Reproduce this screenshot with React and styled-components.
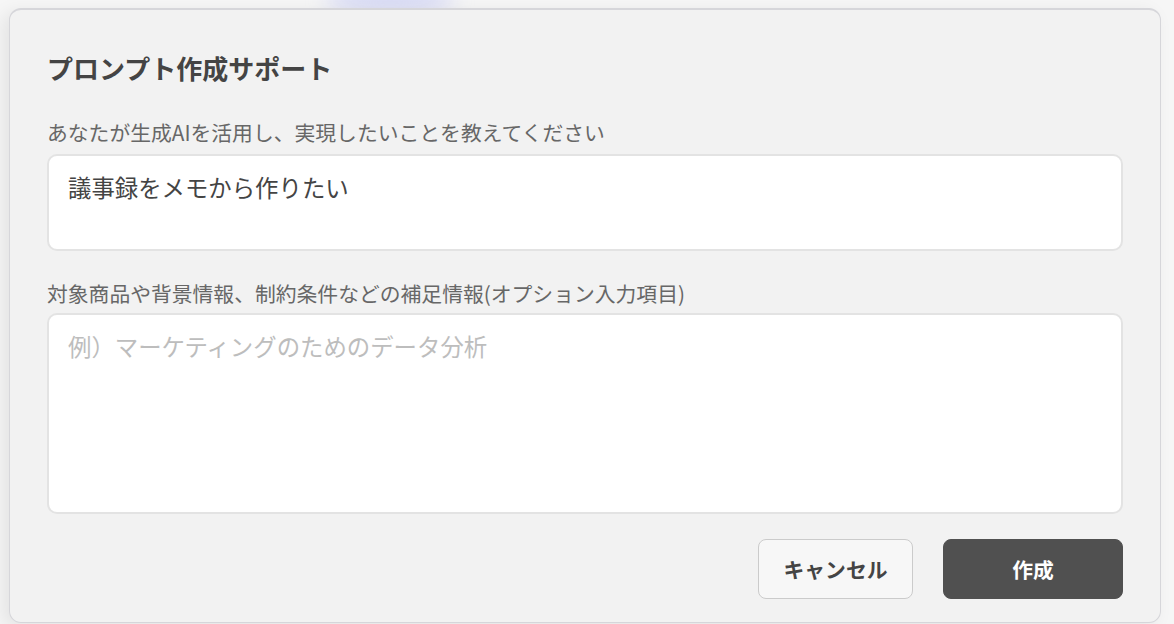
import React from "react"
import styled, { createGlobalStyle } from "styled-components"

const GlobalStyle = createGlobalStyle`
  html, body {
    margin: 0;
    padding: 0;
    background: #f6f6f6;
    height: 624px;
    overflow: hidden;
  }
  * {
    box-sizing: border-box;
  }
`

const font = `"Noto Sans CJK JP", "Noto Sans", sans-serif`

const StyledPage = styled.div`
  position: relative;
  padding: 8px 13px 0 9px;
  font-family: ${font};
`

// faint blue glow peeking above the dialog
const StyledGlow = styled.div`
  position: absolute;
  top: -14px;
  left: 325px;
  width: 130px;
  height: 26px;
  border-radius: 50%;
  background: rgba(190, 195, 245, 0.6);
  filter: blur(10px);
`

const StyledModal = styled.div`
  position: relative;
  display: flex;
  flex-direction: column;
  padding: 37px 37px 23px 37px;
  background: #f2f2f2;
  border: 1px solid #d6d6da;
  border-top-width: 2px;
  border-radius: 12px;
  box-shadow: -6px 4px 18px rgba(0, 0, 0, 0.08);
`

const StyledTitle = styled.h2`
  margin: 0;
  font-size: 26px;
  line-height: 42px;
  font-weight: 700;
  color: #444;
`

const StyledLabel = styled.label`
  display: block;
  margin-top: ${(props) => props.gap}px;
  font-size: 20.8px;
  line-height: 31px;
  color: #676767;
`

const StyledField = styled.textarea`
  display: block;
  width: 100%;
  height: ${(props) => props.h}px;
  margin-top: ${(props) => props.gap}px;
  padding: 14px 19px;
  resize: none;
  outline: none;
  background: #fff;
  border: 2px solid #e3e3e3;
  border-radius: 10px;
  font-family: ${font};
  font-size: 23.4px;
  line-height: 35px;
  color: #444;

  &::placeholder {
    color: #bdbdbd;
  }
`

const StyledActions = styled.div`
  display: flex;
  justify-content: flex-end;
  gap: 30px;
  margin-top: 25px;
`

const StyledButton = styled.button`
  width: ${(props) => (props.primary ? 180 : 155)}px;
  height: 60px;
  border-radius: 8px;
  border: 1px solid ${(props) => (props.primary ? "#505050" : "#cbcbcb")};
  background: ${(props) => (props.primary ? "#505050" : "#f7f7f7")};
  color: ${(props) => (props.primary ? "#fff" : "#444")};
  font-family: ${font};
  font-size: 20.8px;
  font-weight: 700;
  cursor: pointer;
`

const App = () => {
  return (
    <>
      <GlobalStyle />
      <StyledPage>
        <StyledGlow />
        <StyledModal>
          <StyledTitle>プロンプト作成サポート</StyledTitle>

          <StyledLabel gap={28}>
            あなたが生成AIを活用し、実現したいことを教えてください
          </StyledLabel>
          <StyledField gap={6} h={97} value="議事録をメモから作りたい" readOnly />

          <StyledLabel gap={27}>
            対象商品や背景情報、制約条件などの補足情報(オプション入力項目)
          </StyledLabel>
          <StyledField
            gap={4}
            h={201}
            placeholder="例）マーケティングのためのデータ分析"
            readOnly
          />

          <StyledActions>
            <StyledButton>キャンセル</StyledButton>
            <StyledButton primary>作成</StyledButton>
          </StyledActions>
        </StyledModal>
      </StyledPage>
    </>
  )
}

export default App
